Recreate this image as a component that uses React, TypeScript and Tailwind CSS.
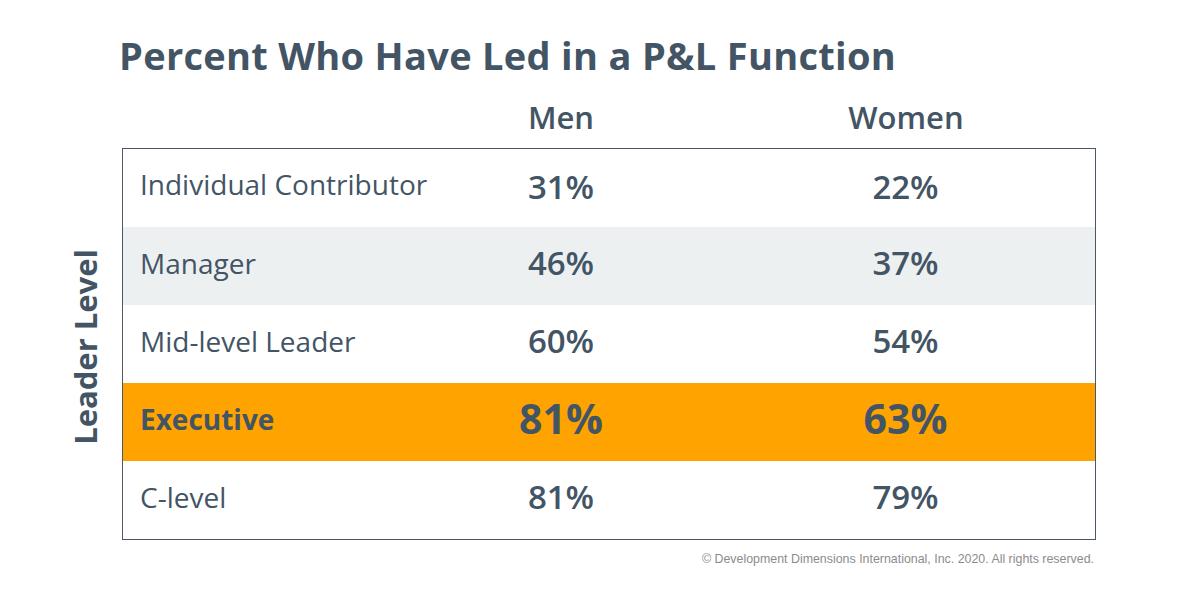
import React from "react";

const rows = [
  { label: "Individual Contributor", men: "31%", women: "22%", bg: "bg-white", hl: false, first: true },
  { label: "Manager", men: "46%", women: "37%", bg: "bg-[#ecf0f1]", hl: false, first: false },
  { label: "Mid-level Leader", men: "60%", women: "54%", bg: "bg-white", hl: false, first: false },
  { label: "Executive", men: "81%", women: "63%", bg: "bg-[#ffa300]", hl: true, first: false },
  { label: "C-level", men: "81%", women: "79%", bg: "bg-white", hl: false, first: false },
];

export default function App() {
  return (
    <div className="w-[1200px] h-[600px] bg-white text-[#435565] font-['Open_Sans',sans-serif] overflow-hidden">
      <div className="pl-[119px] pt-[30px]">
        <h1 className="text-[38px] leading-[50px] font-bold tracking-[0.3px]">Percent Who Have Led in a P&amp;L Function</h1>
      </div>
      <div className="flex">
        <div className="w-[122px] flex flex-col">
          <div className="h-[68px]" />
          <div className="h-[392px] flex items-center justify-center pl-[48px] pt-[6px]">
            <div className="[writing-mode:vertical-rl] rotate-180 text-[31px] font-bold leading-none">Leader Level</div>
          </div>
        </div>
        <div className="w-[974px]">
          <div className="grid grid-cols-[284px_310px_1fr] h-[68px] items-center">
            <div />
            <div className="text-center text-[31px] font-semibold pt-[7px]">Men</div>
            <div className="text-center text-[31px] font-semibold pt-[7px]">Women</div>
          </div>
          <div className="border border-[#4a5866]">
            {rows.map((r) => (
              <div key={r.label} className={`grid grid-cols-[283px_310px_1fr] h-[78px] items-center ${r.bg}`}>
                <div className={`pl-[17px] whitespace-nowrap text-[28px] ${r.hl ? "font-bold" : "font-normal"} ${r.first ? "pb-[8px]" : "pb-[6px]"}`}>{r.label}</div>
                <div className={`text-center ${r.first ? "pb-[2px]" : "pb-[6px]"} ${r.hl ? "text-[41px] font-bold" : "text-[33px] font-semibold"}`}>{r.men}</div>
                <div className={`text-center ${r.first ? "pb-[2px]" : "pb-[6px]"} ${r.hl ? "text-[41px] font-bold" : "text-[33px] font-semibold"}`}>{r.women}</div>
              </div>
            ))}
          </div>
          <div className="text-right pr-[2px] pt-[10px] text-[12.4px] text-[#8c8c8c] font-['Liberation_Sans',Arial,sans-serif]">
            © Development Dimensions International, Inc. 2020. All rights reserved.
          </div>
        </div>
      </div>
    </div>
  );
}
